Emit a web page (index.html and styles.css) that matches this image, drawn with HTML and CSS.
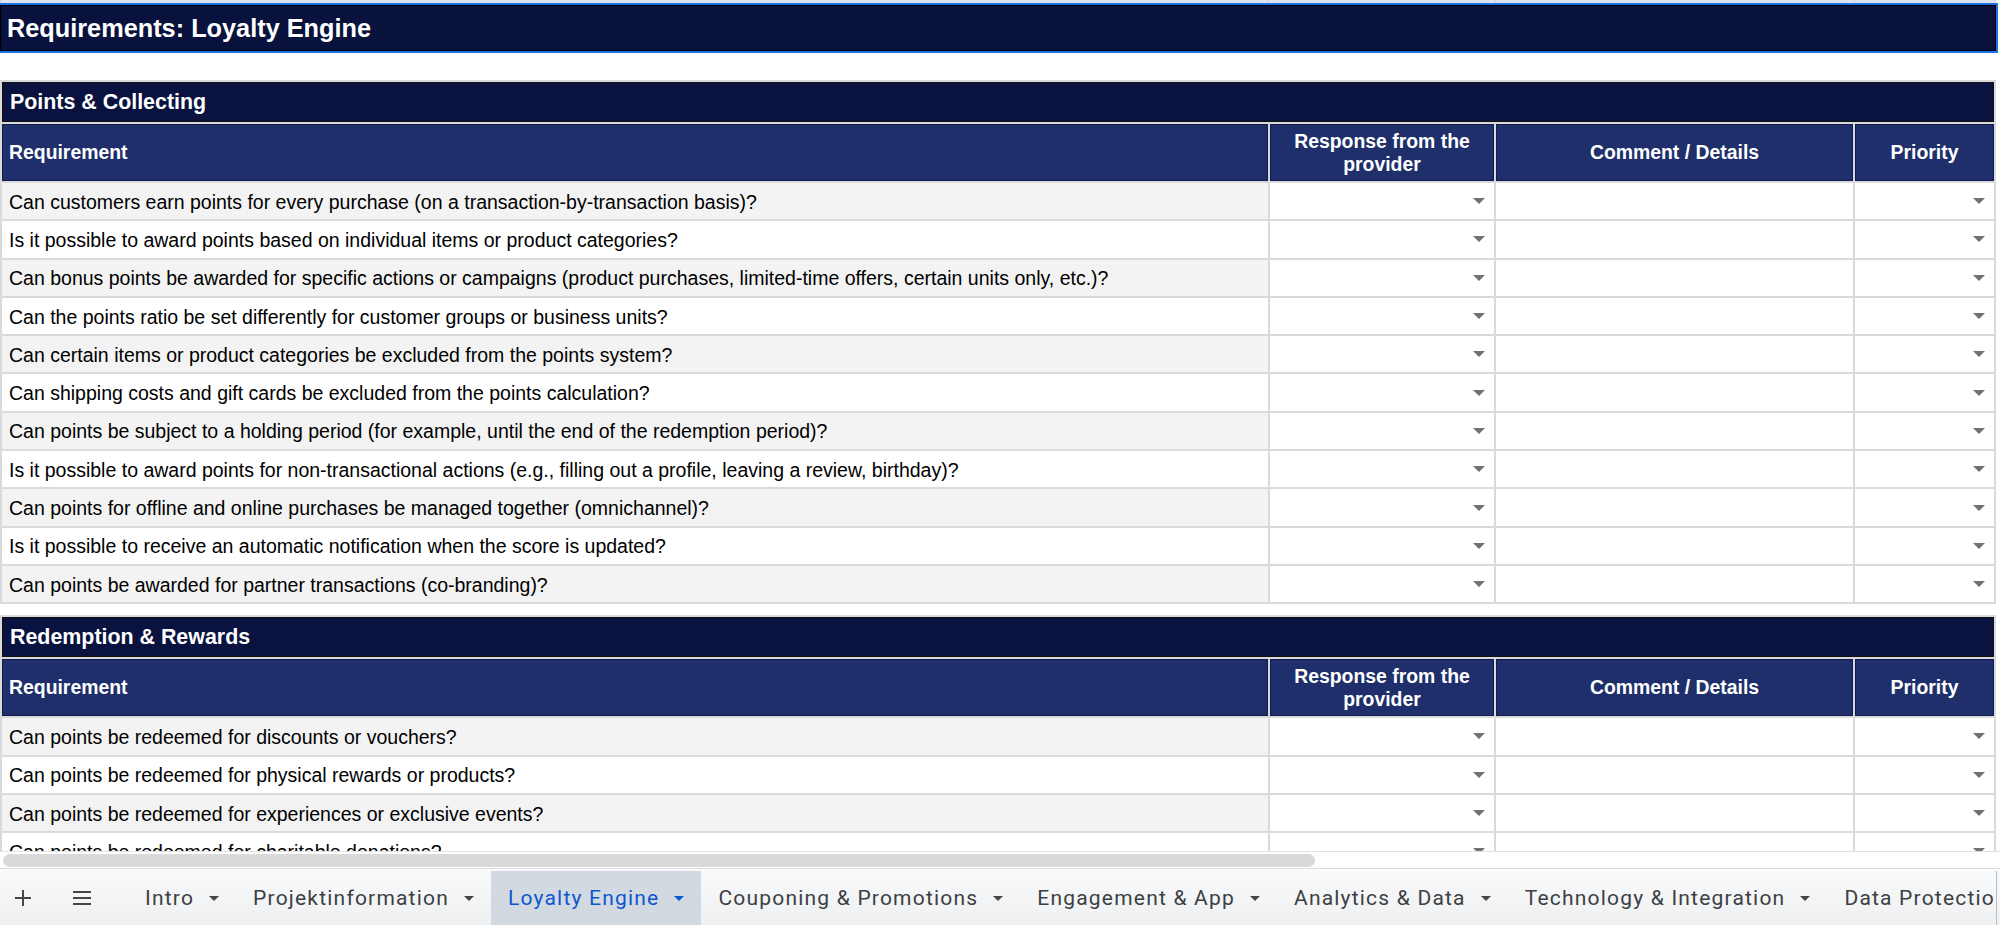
FILE: index.html
```html
<!DOCTYPE html>
<html lang="en">
<head>
  <meta charset="UTF-8" />
  <title>Requirements: Loyalty Engine</title>
  <link rel="stylesheet" href="styles.css">
</head>
<body>
  <div class="app">
    <div class="sheet">
      <div class="grid" id="grid">
        <div class="row strip"><div></div><div></div><div></div><div></div></div>
        <div class="row title-row"><div class="cell full title">Requirements: Loyalty Engine</div></div>
        <div class="row blank"><div class="cell full"></div></div>
      </div>
    </div>

    <div class="hscroll"><div class="hscroll-thumb"></div></div>

    <div class="tabbar">
      <div class="icon-btn">
        <svg width="18" height="18" viewBox="0 0 18 18"><path d="M9 1v16M1 9h16" stroke="#444746" stroke-width="2" fill="none"/></svg>
      </div>
      <div class="icon-btn menu">
        <svg width="20" height="16" viewBox="0 0 20 16"><path d="M1 2h18M1 8h18M1 14h18" stroke="#444746" stroke-width="2" fill="none"/></svg>
      </div>
      <div class="tabs" id="tabs"></div>
    </div>
  </div>

  <script>
    const sections = [
      {
        name: "Points & Collecting",
        rows: [
          "Can customers earn points for every purchase (on a transaction-by-transaction basis)?",
          "Is it possible to award points based on individual items or product categories?",
          "Can bonus points be awarded for specific actions or campaigns (product purchases, limited-time offers, certain units only, etc.)?",
          "Can the points ratio be set differently for customer groups or business units?",
          "Can certain items or product categories be excluded from the points system?",
          "Can shipping costs and gift cards be excluded from the points calculation?",
          "Can points be subject to a holding period (for example, until the end of the redemption period)?",
          "Is it possible to award points for non-transactional actions (e.g., filling out a profile, leaving a review, birthday)?",
          "Can points for offline and online purchases be managed together (omnichannel)?",
          "Is it possible to receive an automatic notification when the score is updated?",
          "Can points be awarded for partner transactions (co-branding)?"
        ]
      },
      {
        name: "Redemption & Rewards",
        rows: [
          "Can points be redeemed for discounts or vouchers?",
          "Can points be redeemed for physical rewards or products?",
          "Can points be redeemed for experiences or exclusive events?",
          "Can points be redeemed for charitable donations?"
        ]
      }
    ];

    const tabs = [
      "Intro", "Projektinformation", "Loyalty Engine", "Couponing & Promotions",
      "Engagement & App", "Analytics & Data", "Technology & Integration", "Data Protection"
    ];

    function el(tag, cls, html) {
      const node = document.createElement(tag);
      if (cls) node.className = cls;
      if (html) node.innerHTML = html;
      return node;
    }

    function dropdownCell() {
      const cell = el("div", "cell select");
      cell.appendChild(el("span", "caret"));
      return cell;
    }

    function renderSheet() {
      const grid = document.getElementById("grid");

      sections.forEach((section, s) => {
        const head = el("div", "row section-row");
        head.appendChild(el("div", "cell full section", section.name.replace("&", "&amp;")));
        grid.appendChild(head);

        const cols = el("div", "row head-row");
        cols.appendChild(el("div", "cell head left", "Requirement"));
        cols.appendChild(el("div", "cell head", "Response from the provider"));
        cols.appendChild(el("div", "cell head", "Comment / Details"));
        cols.appendChild(el("div", "cell head", "Priority"));
        grid.appendChild(cols);

        section.rows.forEach((text, idx) => {
          const row = el("div", "row data");
          const req = el("div", "cell req" + (idx % 2 === 0 ? " shade" : ""));
          req.textContent = text;
          row.appendChild(req);
          row.appendChild(dropdownCell());
          row.appendChild(el("div", "cell"));
          row.appendChild(dropdownCell());
          grid.appendChild(row);
        });

        if (s < sections.length - 1) {
          const gap = el("div", "row spacer");
          gap.appendChild(el("div", "cell full"));
          grid.appendChild(gap);
        }
      });
    }

    function renderTabs() {
      const bar = document.getElementById("tabs");
      tabs.forEach(name => {
        const tab = el("div", "tab" + (name === "Loyalty Engine" ? " active" : ""));
        const label = el("span", "tab-label");
        label.textContent = name;
        tab.appendChild(label);
        tab.appendChild(el("span", "tab-caret"));
        bar.appendChild(tab);
      });
    }

    renderSheet();
    renderTabs();
  </script>
</body>
</html>
```

FILE: styles.css
```css
body {
  margin: 0;
  padding: 0;
  background: #fff;
  font-family: "Liberation Sans", Arial, sans-serif;
  overflow: hidden;
}

.app {
  width: 2000px;
  height: 925px;
  display: flex;
  flex-direction: column;
}

/* spreadsheet area */

.sheet {
  height: 851px;
  overflow: hidden;
  background: #fff;
}

.grid {
  width: 1996px;
  box-sizing: border-box;
  padding: 0 2px;
  background: #dadada;
  display: flex;
  flex-direction: column;
  gap: 2px;
}

.row {
  display: grid;
  grid-template-columns: 1266px 224px 357px 139px;
  column-gap: 2px;
}

.cell {
  background: #fff;
  display: flex;
  align-items: center;
  min-width: 0;
  overflow: hidden;
  white-space: nowrap;
  box-sizing: border-box;
}

.full {
  grid-column: 1 / -1;
}

.strip {
  height: 3px;
}

.strip div {
  background: #dfe5ee;
}

.title-row {
  height: 46px;
  position: relative;
  z-index: 1;
}

.title {
  background: #08123c;
  color: #fff;
  font-weight: 700;
  font-size: 25.3px;
  padding-left: 6px;
  border: 1px solid #000;
  outline: 2px solid #1a73e8;
  margin: 0 -2px 0 -2px;
}

.blank {
  height: 27px;
}

.blank .cell {
  margin: 0 -2px;
}

.section-row {
  height: 40px;
}

.section {
  background: #0a133f;
  color: #fff;
  font-weight: 700;
  font-size: 21.4px;
  padding-left: 7px;
  border: 1px solid #111;
}

.head-row {
  height: 57px;
}

.head {
  background: #1e2f6b;
  border: 1px solid #101b52;
  color: #fff;
  font-weight: 700;
  font-size: 19.4px;
  line-height: 23px;
  justify-content: center;
  text-align: center;
  white-space: normal;
  padding: 0 10px;
}

.head.left {
  justify-content: flex-start;
  padding-left: 6px;
}

.data {
  height: 36.3px;
}

.req {
  font-size: 19.5px;
  color: #000;
  padding: 2px 0 0 7px;
}

.req.shade {
  background: #f3f3f3;
}

.select {
  justify-content: flex-end;
  padding-right: 9px;
}

.caret {
  width: 0;
  height: 0;
  border-left: 6px solid transparent;
  border-right: 6px solid transparent;
  border-top: 6px solid #717171;
}

.spacer {
  height: 11px;
}

.spacer .cell {
  margin: 0 -2px;
}

/* horizontal scrollbar */

.hscroll {
  height: 17px;
  background: #fff;
  border-top: 1px solid #e2e2e2;
  box-sizing: border-box;
  padding: 2px 0 1px 3px;
}

.hscroll-thumb {
  width: 1312px;
  height: 13px;
  border-radius: 7px;
  background: #dadada;
}

/* sheet tabs */

.tabbar {
  height: 57px;
  box-sizing: border-box;
  border-top: 1px solid #dadce0;
  background: linear-gradient(to bottom, #f9fafb, #eef0f2);
  display: flex;
  align-items: flex-end;
  font-family: Roboto, "Open Sans", sans-serif;
}

.icon-btn {
  width: 46px;
  height: 54px;
  display: flex;
  align-items: center;
  justify-content: center;
}

.icon-btn.menu {
  margin-left: 13px;
}

.tabs {
  margin-left: 23px;
  width: 1868px;
  height: 54px;
  display: flex;
  overflow: hidden;
  border-right: 1px solid #b9bcc0;
}

.tab {
  flex: 0 0 auto;
  display: flex;
  align-items: center;
  gap: 15px;
  padding: 0 17px;
  font-size: 21px;
  letter-spacing: 1.2px;
  color: #3c4043;
}

.tab.active {
  background: #d3d9e1;
  color: #0b57d0;
}

.tab-caret {
  width: 0;
  height: 0;
  border-left: 5px solid transparent;
  border-right: 5px solid transparent;
  border-top: 5px solid #444746;
}

.tab.active .tab-caret {
  border-top-color: #0b57d0;
}
```
